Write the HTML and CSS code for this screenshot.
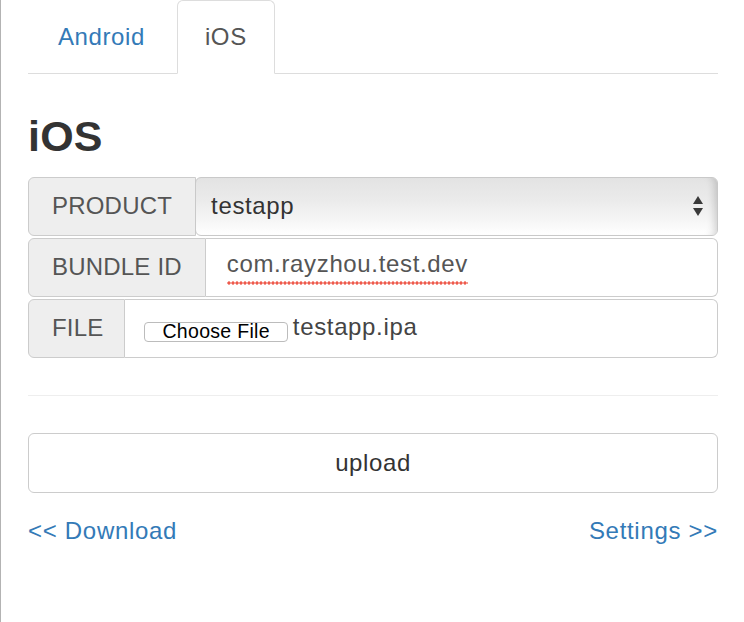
FILE: index.html
```html
<!DOCTYPE html>
<html lang="en">
<head>
<meta charset="utf-8">
<title>iOS upload</title>
<link rel="stylesheet" href="styles.css">
</head>
<body>
<div class="page">
  <ul class="tabs">
    <li class="tab"><a href="#">Android</a></li>
    <li class="tab active"><a href="#">iOS</a></li>
  </ul>

  <h1 class="title">iOS</h1>

  <div class="form">
    <div class="group">
      <span class="addon">PRODUCT</span>
      <div class="select">
        <span class="select-value">testapp</span>
        <svg class="select-arrows" width="12" height="22" viewBox="0 0 12 22" aria-hidden="true">
          <polygon points="6,0 11,8 1,8" fill="#3a3a3a"/>
          <polygon points="1,12 11,12 6,20" fill="#3a3a3a"/>
        </svg>
      </div>
    </div>
    <div class="group">
      <span class="addon">BUNDLE ID</span>
      <div class="field"><span class="misspelled">com.rayzhou.test.dev</span></div>
    </div>
    <div class="group">
      <span class="addon addon-file">FILE</span>
      <div class="field file-field">
        <span class="file-button">Choose File</span>
        <span class="file-name">testapp.ipa</span>
      </div>
    </div>
  </div>

  <hr class="divider">

  <button class="upload" type="button">upload</button>

  <div class="links">
    <a href="#">&lt;&lt; Download</a>
    <a href="#">Settings &gt;&gt;</a>
  </div>
</div>
</body>
</html>
```

FILE: styles.css
```css
* {
  box-sizing: border-box;
}

html, body {
  margin: 0;
  padding: 0;
  background: #fff;
}

body {
  font-family: "Liberation Sans", Arial, Helvetica, sans-serif;
  font-size: 24px;
  color: #555;
}

.page {
  min-height: 622px;
  border-left: 1px solid #b3b3b3;
  padding: 0 26px 0 27px;
  display: flex;
  flex-direction: column;
}

/* Tabs */
.tabs {
  list-style: none;
  margin: 0;
  padding: 0;
  display: flex;
  border-bottom: 1px solid #ddd;
  height: 74px;
}

.tab {
  margin-right: 2px;
  margin-bottom: -1px;
}

.tab a {
  display: block;
  padding: 0 29px 0 29px;
  line-height: 72px;
  border: 1px solid transparent;
  border-radius: 6px 6px 0 0;
  color: #337ab7;
  text-decoration: none;
  letter-spacing: 0.6px;
}

.tab.active a {
  color: #555;
  background: #fff;
  border-color: #ddd;
  border-bottom-color: transparent;
  padding: 0 27px;
}

/* Heading */
.title {
  margin: 38px 0 17px;
  font-size: 43px;
  line-height: 48px;
  font-weight: 700;
  color: #333;
  letter-spacing: 0.2px;
}

/* Input groups */
.form {
  display: flex;
  flex-direction: column;
  gap: 2px;
}

.group {
  display: flex;
  height: 59px;
}

.addon {
  flex: none;
  display: flex;
  align-items: center;
  padding: 0 23px 2px 23px;
  background: #eee;
  border: 1px solid #ccc;
  border-radius: 6px 0 0 6px;
  color: #555;
  letter-spacing: 0.2px;
  white-space: nowrap;
}

.addon-file {
  padding-right: 21px;
}

.field {
  flex: 1;
  display: flex;
  align-items: center;
  padding: 0 21px;
  border: 1px solid #ccc;
  border-left: none;
  border-radius: 0 6px 6px 0;
  background: #fff;
  color: #555;
  letter-spacing: 0.65px;
  white-space: nowrap;
}

.misspelled {
  padding-bottom: 7px;
  background-image: radial-gradient(circle at 2px 2px, #ee5a4c 1.3px, rgba(238, 90, 76, 0) 2px);
  background-size: 4px 4px;
  background-repeat: repeat-x;
  background-position: 0 100%;
}

.select {
  flex: 1;
  display: flex;
  align-items: center;
  justify-content: space-between;
  margin-left: -1px;
  padding: 0 13px 2px 15px;
  border: 1px solid #c9c9c9;
  border-radius: 6px;
  background: linear-gradient(to bottom, #e3e3e3 0%, #ebebeb 40%, #f6f6f6 75%, #ffffff 100%);
  box-shadow: inset -9px 0 8px -7px rgba(0, 0, 0, 0.18);
  color: #333;
  letter-spacing: 0.65px;
}

.select-arrows {
  flex: none;
  margin-top: 2px;
}

.file-field {
  padding-left: 19px;
  padding-bottom: 4px;
}

.file-button {
  flex: none;
  height: 20px;
  margin-top: 10px;
  padding: 0 17px;
  border: 1px solid #bcbcbc;
  border-radius: 4px;
  background: #fff;
  color: #000;
  font-size: 19.5px;
  line-height: 20px;
  letter-spacing: 0.3px;
  display: flex;
  align-items: flex-end;
}

.file-name {
  margin-left: 5px;
  color: #444;
}

/* Divider */
.divider {
  margin: 37px 0;
  border: none;
  border-top: 1px solid #eee;
  height: 0;
}

/* Upload button */
.upload {
  display: block;
  width: 100%;
  height: 60px;
  padding: 0;
  border: 1px solid #ccc;
  border-radius: 6px;
  background: #fff;
  color: #333;
  font-family: "Liberation Sans", Arial, Helvetica, sans-serif;
  font-size: 24px;
  letter-spacing: 0.6px;
  cursor: pointer;
}

/* Links */
.links {
  display: flex;
  justify-content: space-between;
  margin-top: 21px;
  line-height: 34px;
}

.links a {
  color: #337ab7;
  text-decoration: none;
  letter-spacing: 0.7px;
}
```
